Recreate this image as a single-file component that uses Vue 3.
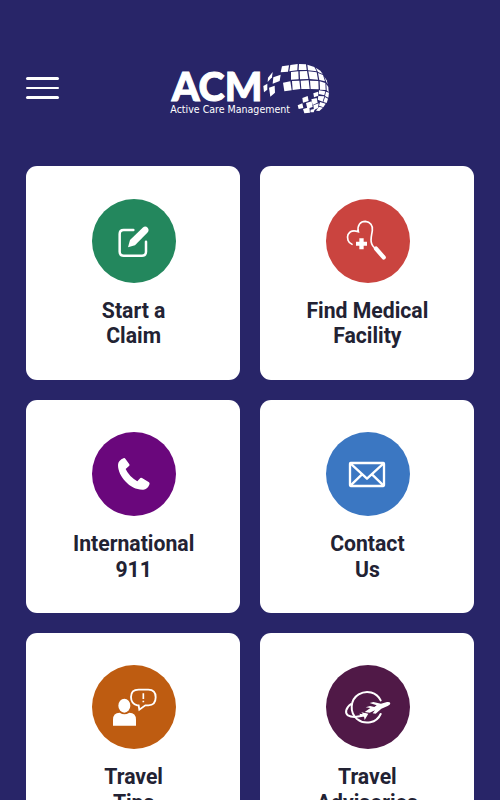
<template>
  <div class="page">
    <header class="header">
      <button class="menu" aria-label="Menu">
        <span></span>
        <span></span>
        <span></span>
      </button>
      <svg class="logo" viewBox="0 0 540 210">
        <text class="name" x="35" y="139" textLength="272" lengthAdjust="spacingAndGlyphs">ACM</text>
        <text class="tagline" x="31" y="175" textLength="359" lengthAdjust="spacingAndGlyphs">Active Care Management</text>
        <polygon v-for="(p, i) in tiles" :key="i" :points="p" />
      </svg>
    </header>

    <main class="grid">
      <div v-for="item in items" :key="item.icon" class="card">
        <div class="circle" :class="item.icon">
          <svg v-if="item.icon === 'claim'" viewBox="24 26 252 252">
            <path
              d="M148 119H119Q107 119 107 131V184Q107 196 119 196H174Q186 196 186 184V154"
              fill="none"
              stroke="#fff"
              stroke-width="7.5"
              stroke-linecap="round"
            />
            <path d="M132 171L138 149L176 112Q184 105 191 112Q197 119 190 127L153 165Z" fill="#fff" />
          </svg>

          <svg v-else-if="item.icon === 'medical'" viewBox="24 26 252 252">
            <path
              d="M102 162C90 158 86 143 90 133C95 123 107 119 121 124C117 105 127 93 142 93C157 94 165 106 163 120C161 136 156 149 161 160Q163 166 170 173"
              fill="none"
              stroke="#fff"
              stroke-width="5"
              stroke-linecap="round"
            />
            <path d="M124 144h13v10h10v12h-10v11h-13v-11h-10v-12h10z" fill="#fff" />
            <path d="M174 175L197 201" stroke="#fff" stroke-width="13" stroke-linecap="round" />
          </svg>

          <svg v-else-if="item.icon === 'phone'" viewBox="24 24 252 252">
            <path
              d="M120 102Q122 101 124 104L136 121Q138 124 135 126L125 135Q134 156 160 172L169 162Q171 160 174 162L195 175Q198 177 196 182Q190 196 178 197C140 199 102 158 102 123Q102 109 120 102Z"
              fill="#fff"
            />
          </svg>

          <svg v-else-if="item.icon === 'mail'" viewBox="24 24 252 252">
            <g fill="none" stroke="#fff" stroke-width="7" stroke-linejoin="round">
              <rect x="96" y="117" width="102" height="69" rx="2" />
              <path d="M98 119L147 164L196 119M98 184L132 151M196 184L162 151" />
            </g>
          </svg>

          <svg v-else-if="item.icon === 'tips'" viewBox="24 22 252 252">
            <ellipse cx="121" cy="144" rx="18" ry="21" fill="#fff" />
            <path d="M87 204V186Q87 165 107 165Q121 175 136 165Q156 165 156 186V204Z" fill="#fff" />
            <path
              d="M164 143H160Q141 138 141 118Q141 96 164 96H193Q215 96 215 119Q215 143 193 143H184L166 156Z"
              fill="none"
              stroke="#fff"
              stroke-width="5.5"
            />
            <path d="M178 107V124M178 129V134" stroke="#fff" stroke-width="5" />
          </svg>

          <svg v-else viewBox="47 22 252 252">
            <g fill="none" stroke="#fff" stroke-width="6" stroke-linecap="round">
              <path d="M211 128C199 103 169 96 145 110C119 126 117 164 140 184C164 203 199 196 211 169" />
              <path d="M122 139C106 150 103 166 113 173C125 181 150 178 166 170" />
            </g>
            <path
              d="M163 163L180 151L166 149L179 145L192 148L199 143L178 136L189 133L212 138L230 133Q239 132 240 137Q240 142 232 145L213 153L196 168L187 167L194 158L178 165Z"
              fill="#fff"
            />
            <path d="M147 168L158 170L153 164L174 168L163 187L161 177L151 176Z" fill="#fff" />
          </svg>
        </div>
        <h2>{{ item.first }}<br />{{ item.second }}</h2>
      </div>
    </main>
  </div>
</template>

<script setup>
const items = [
  { icon: "claim", first: "Start a", second: "Claim" },
  { icon: "medical", first: "Find Medical", second: "Facility" },
  { icon: "phone", first: "International", second: "911" },
  { icon: "mail", first: "Contact", second: "Us" },
  { icon: "tips", first: "Travel", second: "Tips" },
  { icon: "travel", first: "Travel", second: "Advisories" },
];

// squares of the globe in the logo
const tiles = [
  // left tail
  "324,68 338,51 336,67 323,81",
  "340,67 362,59 359,78 338,86",
  "310,93 322,86 322,104 312,112",
  "327,98 344,92 345,113 331,125",
  // top rows
  "366,34 387,31 384,50 362,52",
  "391,30 413,27 412,46 388,49",
  "417,27 438,28 440,45 416,45",
  "442,29 463,36 470,49 444,46",
  "467,38 481,47 488,57 474,51",
  "393,51 415,49 416,73 393,74",
  "419,49 441,48 445,72 420,73",
  "445,49 470,52 474,74 449,72",
  "474,54 489,60 495,79 478,75",
  "493,65 500,76 503,88 499,81",
  "369,83 391,79 395,106 373,109",
  "396,78 418,77 421,102 398,105",
  "422,77 446,76 449,102 424,102",
  "450,77 475,78 476,103 452,102",
  "479,79 496,84 497,105 480,104",
  "499,87 505,96 506,111 500,106",
  // right edge, curling down
  "477,106 496,109 493,121 476,117",
  "498,110 507,113 505,128 495,123",
  "460,115 474,110 475,122 462,127",
  "475,123 493,124 488,140 473,134",
  "495,126 504,131 500,144 490,141",
  "480,141 497,146 490,157 477,152",
  "427,129 443,123 446,138 429,143",
  "454,133 470,129 473,143 458,150",
  "438,144 455,139 458,156 442,161",
  "460,151 476,145 474,159 462,165",
  "477,155 489,158 478,168 468,167",
  "413,151 427,145 430,159 416,162",
  "429,162 448,157 450,173 433,175",
  "452,164 465,161 461,172 451,172",
];
</script>

<style>
body {
  margin: 0;
  background: #282568;
}
</style>

<style scoped>
.page {
  box-sizing: border-box;
  height: 800px;
  overflow: hidden;
  padding: 55px 26.3px 0;
  background: #282568;
  font-family: Roboto, sans-serif;
}
.header {
  display: flex;
  align-items: flex-start;
  height: 111.4px;
}
.menu {
  display: flex;
  flex-direction: column;
  gap: 7px;
  width: 32.5px;
  margin-top: 22px;
  padding: 0;
  border: 0;
  background: none;
}
.menu span {
  height: 2.6px;
  border-radius: 2px;
  background: #fff;
}
.logo {
  width: 180px;
  height: 70px;
  margin-left: 101.2px;
  fill: #fff;
}
.name {
  font: 900 118px Lato, sans-serif;
  stroke: #fff;
  stroke-width: 3px;
}
.tagline {
  font: 29px "DejaVu Sans", sans-serif;
}
.grid {
  display: grid;
  grid-template-columns: 1fr 1fr;
  grid-auto-rows: 213.4px;
  gap: 20px;
}
.card {
  display: flex;
  flex-direction: column;
  align-items: center;
  box-sizing: border-box;
  padding-top: 32.3px;
  border-radius: 11px;
  background: #fff;
}
.circle {
  width: 84px;
  height: 84px;
  margin-left: 2px;
  border-radius: 50%;
}
.circle svg {
  display: block;
  width: 84px;
  height: 84px;
}
.claim {
  background: #23875d;
}
.medical {
  background: #ca443f;
}
.phone {
  background: #6a077c;
}
.mail {
  background: #3b77c2;
}
.tips {
  background: #be5c11;
}
.travel {
  background: #501947;
}
h2 {
  margin: 15px 0 0;
  padding-left: 1px;
  color: #222233;
  font-size: 21.2px;
  font-weight: 700;
  line-height: 25.5px;
  text-align: center;
}
</style>
